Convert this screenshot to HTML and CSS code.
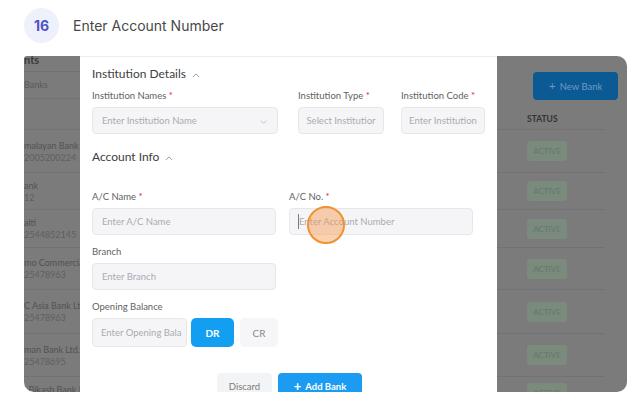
FILE: index.html
```html
<!DOCTYPE html>
<html>
<head>
<meta charset="utf-8">
<link rel="stylesheet" href="styles.css">
</head>
<body>
<div class="header">
  <div class="badge">16</div>
  <div class="title">Enter Account Number</div>
</div>
<div class="frame">
  <div class="side-left">
    <div class="l-title">nts</div>
    <div class="l-tab">Banks</div>
    <div class="l-head"></div>
    <div class="l-row r1"><span>malayan Bank Lt</span><span>2005200224</span></div>
    <div class="l-row r2"><span>ank</span><span>12</span></div>
    <div class="l-row r3"><span>alti</span><span>2544852145</span></div>
    <div class="l-row r4"><span>mo Commercial</span><span>25478963</span></div>
    <div class="l-row r5"><span>C Asia Bank Ltd.</span><span>25478963</span></div>
    <div class="l-row r6"><span>man Bank Ltd.</span><span>25478695</span></div>
    <div class="l-row r7"><span>i Bikash Bank L</span></div>
  </div>
  <div class="modal">
    <div class="sec-title">Institution Details <svg class="chev" viewBox="0 0 10 6" width="8" height="5"><path d="M1 5 L5 1 L9 5" fill="none" stroke="#9a9a9a" stroke-width="1.2"/></svg></div>
    <div class="grid3">
      <div class="field">
        <div class="label">Institution Names <span class="req">*</span></div>
        <div class="input"><span class="ph">Enter Institution Name</span><svg class="dd" viewBox="0 0 10 6" width="7" height="4"><path d="M1 1 L5 5 L9 1" fill="none" stroke="#b5b5b5" stroke-width="1.2"/></svg></div>
      </div>
      <div class="field">
        <div class="label">Institution Type <span class="req">*</span></div>
        <div class="input center"><span class="ph">Select Institutior</span></div>
      </div>
      <div class="field f-code">
        <div class="label">Institution Code <span class="req">*</span></div>
        <div class="input center"><span class="ph">Enter Institution</span></div>
      </div>
    </div>
    <div class="sec-title sec2">Account Info <svg class="chev" viewBox="0 0 10 6" width="8" height="5"><path d="M1 5 L5 1 L9 5" fill="none" stroke="#9a9a9a" stroke-width="1.2"/></svg></div>
    <div class="grid2">
      <div class="field">
        <div class="label">A/C Name <span class="req">*</span></div>
        <div class="input"><span class="ph">Enter A/C Name</span></div>
      </div>
      <div class="field">
        <div class="label">A/C No. <span class="req">*</span></div>
        <div class="input focus"><span class="caret"></span><span class="ph">Enter Account Number</span><span class="click"></span></div>
      </div>
    </div>
    <div class="field f-branch">
      <div class="label">Branch</div>
      <div class="input"><span class="ph">Enter Branch</span></div>
    </div>
    <div class="field f-open">
      <div class="label">Opening Balance</div>
      <div class="ob-row">
        <div class="input ob"><span class="ph">Enter Opening Bala</span></div>
        <div class="btn-dr">DR</div>
        <div class="btn-cr">CR</div>
      </div>
    </div>
    <div class="actions">
      <div class="btn-discard">Discard</div>
      <div class="btn-add"><span class="plus">+</span> Add Bank</div>
    </div>
  </div>
  <div class="side-right">
    <div class="r-top">
      <div class="new-bank"><span class="plus">+</span> New Bank</div>
      <div class="status-h">STATUS</div>
    </div>
    <div class="r-row r1"><span class="active">ACTIVE</span></div>
    <div class="r-row r2"><span class="active">ACTIVE</span></div>
    <div class="r-row r3"><span class="active">ACTIVE</span></div>
    <div class="r-row r4"><span class="active">ACTIVE</span></div>
    <div class="r-row r5"><span class="active">ACTIVE</span></div>
    <div class="r-row r6"><span class="active">ACTIVE</span></div>
    <div class="r-row r7"><span class="active">ACTIVE</span></div>
  </div>
</div>
</body>
</html>
```
FILE: styles.css
```css
html, body {
  margin: 0;
  padding: 0;
  background: #ffffff;
}
body {
  width: 643px;
  height: 408px;
  overflow: hidden;
  font-family: Lato, "Open Sans", sans-serif;
}
.header {
  height: 56px;
  display: flex;
  align-items: center;
  padding-left: 24px;
  box-sizing: border-box;
  padding-bottom: 5px;
}
.badge {
  width: 35px;
  height: 35px;
  border-radius: 50%;
  background: #eef0fb;
  color: #4c53c7;
  font-family: Inter, sans-serif;
  font-weight: 700;
  font-size: 14px;
  display: flex;
  align-items: center;
  justify-content: center;
}
.title {
  margin-left: 14px;
  font-family: Inter, sans-serif;
  font-size: 14px;
  color: #484848;
}
.frame {
  margin-left: 24px;
  width: 603px;
  height: 336px;
  border-radius: 3px 10px 10px 10px;
  overflow: hidden;
  display: flex;
  background: #7b7b7b;
}
.side-left {
  width: 56px;
  flex: none;
  overflow: hidden;
  color: #525252;
  font-size: 9px;
  white-space: nowrap;
}
.l-title {
  height: 16px;
  box-sizing: border-box;
  border-bottom: 1px solid #727272;
  font-weight: 700;
  font-size: 11px;
  line-height: 8px;
  color: #3c3c3c;
}
.l-tab {
  height: 27px;
  box-sizing: border-box;
  border-bottom: 1px solid #727272;
  line-height: 26px;
  color: #5a5a5a;
}
.l-head {
  height: 31px;
  box-sizing: border-box;
  border-bottom: 1px solid #727272;
}
.l-row {
  box-sizing: border-box;
  border-bottom: 1px solid #727272;
  display: flex;
  flex-direction: column;
  justify-content: center;
  gap: 1px;
  line-height: 11px;
}
.l-row span:nth-child(2) { color: #5f5f5f; }
.r1 { height: 43px; }
.r2 { height: 37px; }
.r3 { height: 38px; }
.r4 { height: 42px; }
.r5 { height: 44px; }
.r6 { height: 43px; }
.r7 { height: 40px; }
.l-row.r7 { justify-content: flex-start; padding-top: 7px; border-bottom: none; }
.modal {
  width: 417px;
  flex: none;
  background: #ffffff;
  border-top: 1px solid #ececec;
  box-sizing: border-box;
  padding: 9px 12px 0 12px;
}
.sec-title {
  font-size: 12px;
  line-height: 16px;
  color: #404040;
  display: flex;
  align-items: center;
}
.chev { margin-left: 6px; margin-top: 3px; }
.sec2 { margin-top: 15px; }
.grid3 {
  margin-top: 8px;
  display: grid;
  grid-template-columns: 186px 86px 84px;
  column-gap: 20px;
}
.f-code { margin-left: -3px; width: 84px; }
.grid2 {
  margin-top: 26px;
  display: grid;
  grid-template-columns: 184px 184px;
  column-gap: 13px;
}
.field { display: flex; flex-direction: column; }
.label {
  font-size: 9.5px;
  line-height: 12px;
  color: #5f5f5f;
  margin-bottom: 5px;
  white-space: nowrap;
}
.req { color: #e0245e; }
.input {
  height: 27px;
  box-sizing: border-box;
  background: #f5f5f7;
  border: 1px solid #e7e7eb;
  border-radius: 4px;
  display: flex;
  align-items: center;
  padding-left: 9px;
  position: relative;
  white-space: nowrap;
  overflow: visible;
}
.input.center { justify-content: center; padding-left: 0; overflow: hidden; }
.ph {
  font-size: 9.5px;
  color: #a9abb2;
}
.dd { position: absolute; right: 10px; top: 12px; }
.focus { padding-left: 8px; }
.caret {
  width: 1px;
  height: 15px;
  background: #7a7a7a;
}
.click {
  position: absolute;
  left: 17px;
  top: -3px;
  width: 34px;
  height: 34px;
  border-radius: 50%;
  border: 2px solid #f0922e;
  background: rgba(247, 152, 80, 0.45);
}
.f-branch { margin-top: 11px; width: 184px; }
.f-open { margin-top: 11px; }
.ob-row { display: flex; align-items: center; }
.ob {
  width: 95px;
  height: 29px;
  overflow: hidden;
  padding-left: 8px;
}
.btn-dr {
  margin-left: 4px;
  width: 43px;
  height: 29px;
  border-radius: 5px;
  background: #139ff1;
  color: #ffffff;
  font-size: 10px;
  font-weight: 700;
  display: flex;
  align-items: center;
  justify-content: center;
}
.btn-cr {
  margin-left: 6px;
  width: 38px;
  height: 29px;
  border-radius: 5px;
  background: #f6f6f8;
  color: #8a8a8a;
  font-size: 10px;
  display: flex;
  align-items: center;
  justify-content: center;
}
.actions {
  margin-top: 26px;
  display: flex;
  justify-content: center;
  gap: 6px;
  padding-left: 2px;
}
.btn-discard {
  width: 55px;
  height: 26px;
  border-radius: 4px;
  background: #f3f4f6;
  color: #7a7a7a;
  font-size: 9.5px;
  display: flex;
  align-items: center;
  justify-content: center;
}
.btn-add {
  width: 84px;
  height: 26px;
  border-radius: 4px;
  background: #1b9cf2;
  color: #ffffff;
  font-size: 9.5px;
  font-weight: 700;
  display: flex;
  align-items: center;
  justify-content: center;
  gap: 4px;
}
.plus { font-size: 13px; font-weight: 700; margin-top: -1px; }
.side-right {
  width: 130px;
  flex: none;
  padding-right: 22px;
  box-sizing: border-box;
}
.r-top {
  height: 74px;
  box-sizing: border-box;
  border-bottom: 1px solid #727272;
  padding-top: 16px;
  position: relative;
}
.new-bank {
  margin-left: 36px;
  width: 85px;
  height: 28px;
  border-radius: 4px;
  background: #0b5a94;
  color: #6d9bc0;
  font-size: 9.5px;
  display: flex;
  align-items: center;
  justify-content: center;
  gap: 4px;
}
.new-bank .plus { font-weight: 400; font-size: 12px; }
.status-h {
  margin-top: 14px;
  margin-left: 30px;
  font-size: 8.5px;
  font-weight: 700;
  color: #333333;
}
.r-row {
  box-sizing: border-box;
  border-bottom: 1px solid #727272;
  display: flex;
  align-items: center;
  padding-left: 30px;
}
.r-row.r7 { border-bottom: none; align-items: flex-start; padding-top: 6px; }
.active {
  width: 40px;
  height: 20px;
  border-radius: 3px;
  background: #7a8a7d;
  color: #627a68;
  font-size: 8px;
  display: flex;
  align-items: center;
  justify-content: center;
}
```
